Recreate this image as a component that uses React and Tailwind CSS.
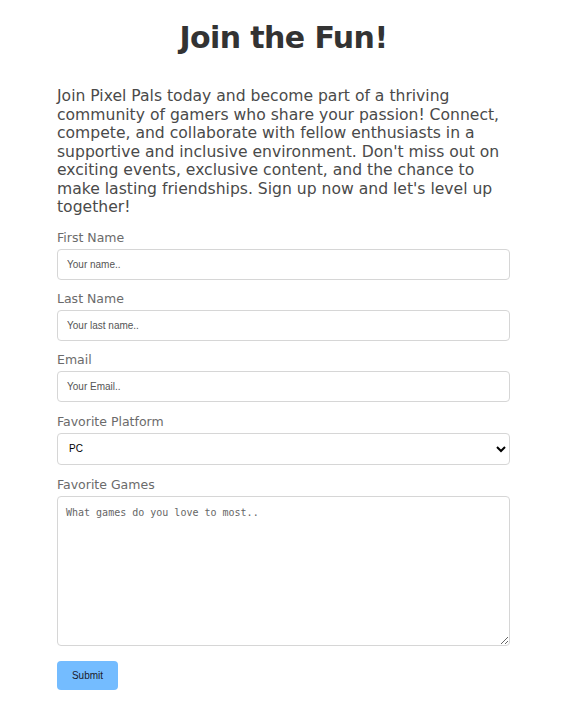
export default function App() {
  const inputCls =
    "block w-full h-[31px] rounded-[4px] border border-[#d6d6d6] bg-white px-[9px] text-[10px] text-[#222] placeholder:text-[#555] outline-none";
  const labelCls = "block text-[12.5px] leading-4 text-[#6b6b6b]";
  const montserrat = { fontFamily: '"DejaVu Sans", sans-serif' };
  const arial = { fontFamily: '"Liberation Sans", Arial, sans-serif' };

  return (
    <div className="min-h-[712px] bg-white pt-[18px]" style={montserrat}>
      <div className="ml-[57px] w-[453px]">
        <h1 className="text-center text-[30px] font-bold leading-[40px] tracking-[-0.6px] text-[#333]">
          Join the Fun!
        </h1>

        <p className="mt-[29px] text-[15.6px] leading-[18.5px] text-[#4a4a4a]">
          Join Pixel Pals today and become part of a thriving
          <br />
          community of gamers who share your passion! Connect,
          <br />
          compete, and collaborate with fellow enthusiasts in a
          <br />
          supportive and inclusive environment. Don't miss out on
          <br />
          exciting events, exclusive content, and the chance to
          <br />
          make lasting friendships. Sign up now and let's level up
          <br />
          together!
        </p>

        <form className="mt-[13px] flex flex-col" onSubmit={(e) => e.preventDefault()}>
          <label className={labelCls}>First Name</label>
          <input type="text" placeholder="Your name.." className={`${inputCls} mt-[3px]`} style={arial} />

          <label className={`${labelCls} mt-[11px]`}>Last Name</label>
          <input type="text" placeholder="Your last name.." className={`${inputCls} mt-[3px]`} style={arial} />

          <label className={`${labelCls} mt-[11px]`}>Email</label>
          <input type="text" placeholder="Your Email.." className={`${inputCls} mt-[3px]`} style={arial} />

          <label className={`${labelCls} mt-[12px]`}>Favorite Platform</label>
          <select
            defaultValue="PC"
            className="mt-[3px] block h-[32px] w-full rounded-[4px] border border-[#d6d6d6] bg-white pl-[7px] pr-[6px] text-[10px] text-black outline-none"
            style={arial}
          >
            <option>PC</option>
            <option>PlayStation</option>
            <option>Xbox</option>
            <option>Nintendo Switch</option>
            <option>Mobile</option>
          </select>

          <label className={`${labelCls} mt-[12px]`}>Favorite Games</label>
          <textarea
            placeholder="What games do you love to most.."
            className="mt-[3px] block h-[150px] w-full rounded-[4px] border border-[#d6d6d6] bg-white px-[8px] py-[8px] text-[10px] text-[#222] placeholder:text-[#666] outline-none"
            style={{ fontFamily: '"DejaVu Sans Mono", monospace' }}
          />

          <div className="mt-[15px]">
            <button
              type="submit"
              className="h-[29px] w-[61px] rounded-[4px] bg-[#74bcff] text-[10px] text-[#1a1a2a]"
              style={arial}
            >
              Submit
            </button>
          </div>
        </form>
      </div>
    </div>
  );
}
